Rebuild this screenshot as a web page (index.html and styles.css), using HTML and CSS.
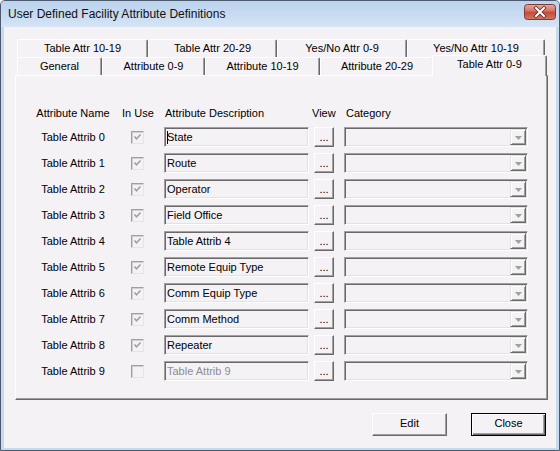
FILE: index.html
```html
<!DOCTYPE html>
<html>
<head>
<meta charset="utf-8">
<link rel="stylesheet" href="styles.css">
</head>
<body>
<div class="window">
  <div class="titlebar">
    <span class="title">User Defined Facility Attribute Definitions</span>
    <span class="closebox">
      <svg width="32" height="16" viewBox="0 0 32 16">
        <defs>
          <linearGradient id="rg" x1="0" y1="0" x2="0" y2="1">
            <stop offset="0" stop-color="#e9a99c"/>
            <stop offset="0.45" stop-color="#d4705f"/>
            <stop offset="0.5" stop-color="#c24a38"/>
            <stop offset="1" stop-color="#d07a5e"/>
          </linearGradient>
        </defs>
        <rect x="0.5" y="0.5" width="31" height="15" rx="3" fill="url(#rg)" stroke="#7e3a33"/>
        <path d="M12 4 L20 12 M20 4 L12 12" stroke="#5b2a24" stroke-width="3.6" stroke-linecap="square"/>
        <path d="M12 4 L20 12 M20 4 L12 12" stroke="#ffffff" stroke-width="2" stroke-linecap="square"/>
      </svg>
    </span>
  </div>
  <div class="frame">
    <div class="client">
      <div class="tabarea">
        <div class="tabrow">
          <div class="tab t1">Table Attr 10-19</div>
          <div class="tab t2">Table Attr 20-29</div>
          <div class="tab t3">Yes/No Attr 0-9</div>
          <div class="tab t4">Yes/No Attr 10-19</div>
        </div>
        <div class="tabrow">
          <div class="tab t5">General</div>
          <div class="tab t6">Attribute 0-9</div>
          <div class="tab t7">Attribute 10-19</div>
          <div class="tab t8">Attribute 20-29</div>
          <div class="tab sel">Table Attr 0-9</div>
        </div>
        <div class="panel">
          <div class="grid">
            <div class="hdr h-name">Attribute Name</div>
            <div class="hdr h-use">In Use</div>
            <div class="hdr h-desc">Attribute Description</div>
            <div class="hdr h-view">View</div>
            <div class="hdr h-cat">Category</div>

            <div class="name">Table Attrib 0</div>
            <div class="use"><span class="chk on"></span></div>
            <div class="edit"><span class="caret"></span>State</div>
            <div><span class="dots">...</span></div>
            <div class="combo"><span class="drop"></span></div>

            <div class="name">Table Attrib 1</div>
            <div class="use"><span class="chk on"></span></div>
            <div class="edit">Route</div>
            <div><span class="dots">...</span></div>
            <div class="combo"><span class="drop"></span></div>

            <div class="name">Table Attrib 2</div>
            <div class="use"><span class="chk on"></span></div>
            <div class="edit">Operator</div>
            <div><span class="dots">...</span></div>
            <div class="combo"><span class="drop"></span></div>

            <div class="name">Table Attrib 3</div>
            <div class="use"><span class="chk on"></span></div>
            <div class="edit">Field Office</div>
            <div><span class="dots">...</span></div>
            <div class="combo"><span class="drop"></span></div>

            <div class="name">Table Attrib 4</div>
            <div class="use"><span class="chk on"></span></div>
            <div class="edit">Table Attrib 4</div>
            <div><span class="dots">...</span></div>
            <div class="combo"><span class="drop"></span></div>

            <div class="name">Table Attrib 5</div>
            <div class="use"><span class="chk on"></span></div>
            <div class="edit">Remote Equip Type</div>
            <div><span class="dots">...</span></div>
            <div class="combo"><span class="drop"></span></div>

            <div class="name">Table Attrib 6</div>
            <div class="use"><span class="chk on"></span></div>
            <div class="edit">Comm Equip Type</div>
            <div><span class="dots">...</span></div>
            <div class="combo"><span class="drop"></span></div>

            <div class="name">Table Attrib 7</div>
            <div class="use"><span class="chk on"></span></div>
            <div class="edit">Comm Method</div>
            <div><span class="dots">...</span></div>
            <div class="combo"><span class="drop"></span></div>

            <div class="name">Table Attrib 8</div>
            <div class="use"><span class="chk on"></span></div>
            <div class="edit">Repeater</div>
            <div><span class="dots">...</span></div>
            <div class="combo"><span class="drop"></span></div>

            <div class="name">Table Attrib 9</div>
            <div class="use"><span class="chk"></span></div>
            <div class="edit disabled">Table Attrib 9</div>
            <div><span class="dots">...</span></div>
            <div class="combo"><span class="drop"></span></div>
          </div>
        </div>
      </div>
      <div class="buttons">
        <div class="btn">Edit</div>
        <div class="btn default">Close</div>
      </div>
    </div>
  </div>
</div>
</body>
</html>
```

FILE: styles.css
```css
* { box-sizing: border-box; }
html, body { margin: 0; padding: 0; }
body {
  width: 560px;
  height: 451px;
  overflow: hidden;
  background: #f4f2f5;
  font-family: "Liberation Sans", Arial, sans-serif;
  font-size: 11px;
  color: #000;
}
.window {
  width: 560px;
  height: 451px;
  border: 1px solid #4b5a6e;
  border-radius: 5px 5px 0 0;
  background: #c6d9ef;
  display: flex;
  flex-direction: column;
  overflow: hidden;
}
.titlebar {
  height: 26px;
  flex: none;
  display: flex;
  justify-content: space-between;
  align-items: flex-start;
  padding: 0 3px 0 7px;
  background: linear-gradient(#bcd3ed, #c9dcf1 60%, #d6e5f5);
}
.title {
  font-family: "Liberation Sans", Arial, sans-serif;
  font-size: 12px;
  line-height: 26px;
  color: #111;
}
.closebox {
  margin-top: 3px;
  width: 32px;
  height: 16px;
  display: block;
}
.closebox svg { display: block; }
.frame {
  flex: 1;
  padding: 0 3px 2px 3px;
  display: flex;
}
.client {
  flex: 1;
  background: #f4f2f5;
  display: flex;
  flex-direction: column;
  box-shadow: 0 0 0 0 transparent;
}
.tabarea {
  margin: 12px 0 0 11px;
  width: 533px;
  display: flex;
  flex-direction: column;
}
.tabrow {
  display: flex;
  height: 18px;
  padding-left: 2px;
  align-items: flex-start;
}
.tab {
  height: 18px;
  line-height: 17px;
  text-align: center;
  border-top: 1px solid #ffffff;
  border-left: 1px solid #ffffff;
  border-right: 1px solid #696969;
  box-shadow: inset -1px 0 0 #a0a0a0;
  border-radius: 2px 2px 0 0;
  background: #f4f2f5;
  white-space: nowrap;
}
.t1 { width: 131px; }
.t2 { width: 129px; }
.t3 { width: 130px; }
.t4 { width: 138px; }
.t5 { width: 85px; }
.t6 { width: 103px; }
.t7 { width: 115px; }
.t8 { width: 114px; }
.sel {
  width: 115px;
  margin-left: -2px;
  margin-top: -2px;
  height: 21px;
  line-height: 16px;
  position: relative;
  z-index: 1;
}
.panel {
  border-top: 1px solid #ffffff;
  border-left: 1px solid #ffffff;
  border-right: 1px solid #696969;
  border-bottom: 1px solid #696969;
  box-shadow: inset -1px -1px 0 #a0a0a0;
  padding: 22px 0 15px 12px;
  width: 533px;
}
.grid {
  display: grid;
  grid-template-columns: 90px 46px 150px 30px 184px;
  grid-auto-rows: 26px;
  align-items: center;
}
.hdr { padding-top: 3px; white-space: nowrap; }
.h-name { text-align: center; }
.h-use { padding-left: 4px; }
.h-desc { padding-left: 1px; }
.h-view { margin-left: -2px; }
.h-cat { padding-left: 2px; }
.name { text-align: center; white-space: nowrap; }
.use { padding-left: 13px; display: flex; }
.chk {
  display: block;
  width: 13px;
  height: 13px;
  border-top: 1px solid #a0a0a0;
  border-left: 1px solid #a0a0a0;
  border-right: 1px solid #e6e4e7;
  border-bottom: 1px solid #e6e4e7;
  box-shadow: inset 1px 1px 0 #d0ced1;
  background: #f4f2f5;
}
.chk.on {
  background: #f4f2f5 url("data:image/svg+xml;utf8,<svg xmlns='http://www.w3.org/2000/svg' width='11' height='11'><path d='M2.5 4.5 L4.5 6.8 L8.5 2.5' fill='none' stroke='%23a0a0a0' stroke-width='1.6'/></svg>") no-repeat 0 0;
}
.edit {
  width: 145px;
  height: 20px;
  line-height: 16px;
  padding-left: 2px;
  border-top: 1px solid #a0a0a0;
  border-left: 1px solid #a0a0a0;
  border-right: 1px solid #ffffff;
  border-bottom: 1px solid #ffffff;
  box-shadow: inset 1px 1px 0 #696969, inset -1px -1px 0 #e3e3e3;
  white-space: nowrap;
  overflow: hidden;
  display: flex;
  align-items: center;
}
.edit.disabled { color: #8d8d8d; }
.caret {
  display: inline-block;
  width: 1px;
  height: 13px;
  background: #000;
  margin-right: -1px;
}
.dots {
  display: block;
  width: 20px;
  height: 20px;
  line-height: 18px;
  text-align: center;
  border-top: 1px solid #ffffff;
  border-left: 1px solid #ffffff;
  border-right: 1px solid #696969;
  border-bottom: 1px solid #696969;
  box-shadow: inset -1px -1px 0 #a0a0a0;
}
.combo {
  width: 184px;
  height: 20px;
  border-top: 1px solid #a0a0a0;
  border-left: 1px solid #a0a0a0;
  border-right: 1px solid #ffffff;
  border-bottom: 1px solid #ffffff;
  box-shadow: inset 1px 1px 0 #696969, inset -1px -1px 0 #e3e3e3;
  display: flex;
  justify-content: flex-end;
  padding: 1px;
}
.drop {
  width: 16px;
  height: 16px;
  border-top: 1px solid #e3e3e3;
  border-left: 1px solid #e3e3e3;
  border-right: 1px solid #696969;
  border-bottom: 1px solid #696969;
  box-shadow: inset 1px 1px 0 #ffffff, inset -1px -1px 0 #a0a0a0;
  background: #f4f2f5 url("data:image/svg+xml;utf8,<svg xmlns='http://www.w3.org/2000/svg' width='7' height='4'><path d='M0 0 H7 L3.5 4 Z' fill='%23a0a0a0'/></svg>") no-repeat 4px 6px;
}
.buttons {
  display: flex;
  justify-content: flex-end;
  gap: 24px;
  padding-right: 10px;
  margin-top: 13px;
}
.btn {
  width: 75px;
  height: 23px;
  line-height: 19px;
  text-align: center;
  border-top: 1px solid #ffffff;
  border-left: 1px solid #ffffff;
  border-right: 1px solid #696969;
  border-bottom: 1px solid #696969;
  box-shadow: inset -1px -1px 0 #a0a0a0;
}
.btn.default {
  border: 1px solid #000;
  box-shadow: inset 1px 1px 0 #ffffff, inset -1px -1px 0 #696969, inset -2px -2px 0 #a0a0a0;
}
```
